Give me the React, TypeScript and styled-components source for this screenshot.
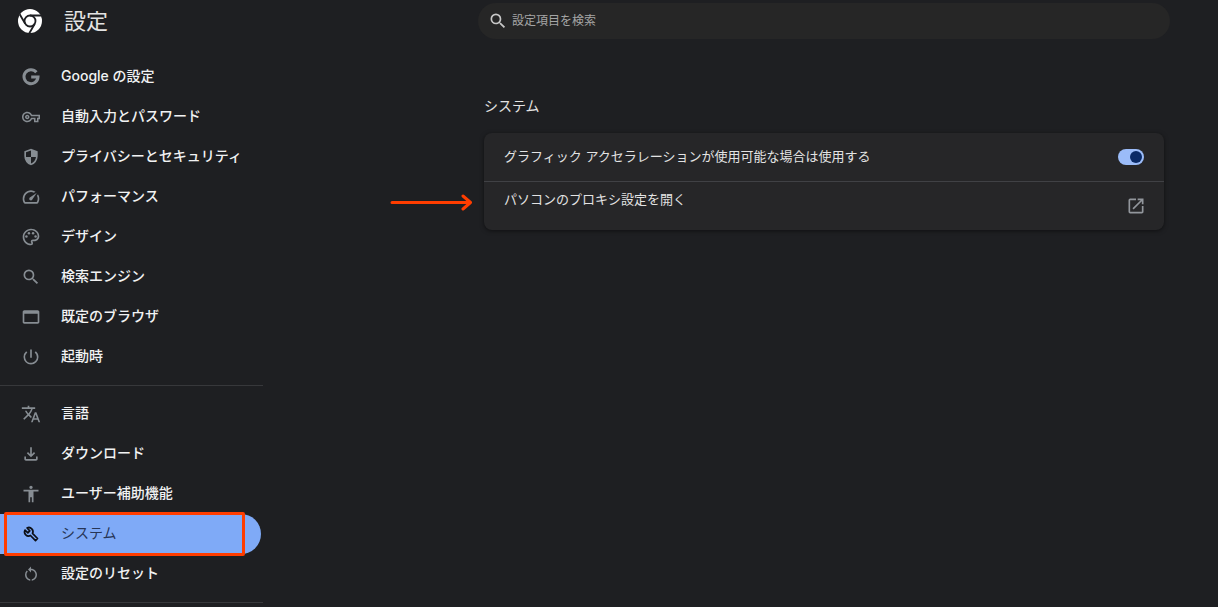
import React, { useState } from "react";
import styled, { createGlobalStyle } from "styled-components";
import {
  MdOutlineVpnKey,
  MdOutlinePalette,
  MdSearch,
  MdPowerSettingsNew,
  MdTranslate,
  MdOutlineFileDownload,
  MdAccessibility,
  MdRestartAlt,
  MdOpenInNew,
} from "react-icons/md";

const GlobalStyle = createGlobalStyle`
  *, *::before, *::after { box-sizing: border-box; }
  body {
    margin: 0;
    background: #1e1f22;
    color: #e3e3e3;
    font-family: Inter, "Noto Sans CJK JP", sans-serif;
    font-size: 14px;
    line-height: 20px;
    overflow: hidden;
  }
`;

const Page = styled.div`
  display: grid;
  grid-template-columns: 264px minmax(0, 1fr);
  min-height: 100vh;
`;

const Sidebar = styled.aside`
  display: flex;
  flex-direction: column;
`;

const Brand = styled.header`
  display: flex;
  align-items: center;
  gap: 22px;
  height: 42px;
  padding-left: 18px;
  margin-bottom: 15px;
`;

const Title = styled.h1`
  margin: 0;
  font-size: 22px;
  line-height: 32px;
  font-weight: 400;
  color: #e3e3e3;
`;

const NavGroup = styled.nav`
  display: flex;
  flex-direction: column;
  padding-bottom: 8px;
  margin-bottom: 8px;
  border-bottom: 1px solid #37383b;
  margin-right: 1px;
`;

const NavLink = styled.a<{ $active?: boolean }>`
  position: relative;
  display: flex;
  align-items: center;
  gap: 20px;
  height: 40px;
  margin-right: 2px;
  padding-left: 21px;
  border-radius: 0 20px 20px 0;
  font-weight: ${(p) => (p.$active ? 400 : 500)};
  color: ${(p) => (p.$active ? "#273556" : "#f1f2f3")};
  background: ${(p) => (p.$active ? "#7faaf7" : "transparent")};
  text-decoration: none;
`;

const NavIcon = styled.span<{ $size: number; $active?: boolean }>`
  flex: none;
  display: flex;
  align-items: center;
  justify-content: center;
  width: 20px;
  height: 20px;
  color: ${(p) => (p.$active ? "#0c0f16" : "#878d93")};

  svg {
    width: ${(p) => p.$size}px;
    height: ${(p) => p.$size}px;
  }
`;

const NavLabel = styled.span`
  padding-bottom: 2px;
`;

const Highlight = styled.span`
  position: absolute;
  inset: -2px 16px -2px 4px;
  border: 3px solid #ff3d00;
  border-radius: 2px;
`;

const Main = styled.main`
  display: flex;
  flex-direction: column;
  padding: 3px 48px 0 214px;
`;

const SearchBox = styled.label`
  display: flex;
  align-items: center;
  gap: 4px;
  height: 36px;
  padding: 0 12px 0 10px;
  border-radius: 18px;
  background: #262626;
  color: #c7c7c7;

  svg {
    flex: none;
    width: 20px;
    height: 20px;
  }
`;

const SearchInput = styled.input`
  flex: 1;
  min-width: 0;
  padding: 0;
  border: 0;
  outline: 0;
  background: transparent;
  color: inherit;
  font: inherit;
  font-size: 12px;

  &::placeholder {
    color: #a5a5a5;
    opacity: 1;
  }
`;

const Section = styled.section`
  margin: 57px 6px 0;
`;

const SectionTitle = styled.h2`
  margin: 0 0 17px;
  font-size: 14px;
  line-height: 20px;
  font-weight: 400;
`;

const Card = styled.div`
  border-radius: 8px;
  background: #262628;
  box-shadow: 0 1px 4px rgba(0, 0, 0, 0.5);
  font-size: 13px;
`;

const Row = styled.div`
  position: relative;
  display: flex;
  align-items: center;
  justify-content: space-between;
  height: 48px;
  padding: 0 20px;

  & + & {
    height: 49px;
    border-top: 1px solid #404145;
  }
`;

const RowLabel = styled.label`
  padding-bottom: 2px;
`;

const ProxyLabel = styled.span`
  align-self: flex-start;
  padding-top: 7px;
`;

const Toggle = styled.input`
  appearance: none;
  display: flex;
  align-items: center;
  justify-content: flex-end;
  width: 26px;
  height: 16px;
  margin: 0;
  padding: 2px;
  border-radius: 8px;
  background: #9bbcf9;

  &::before {
    content: "";
    width: 12px;
    height: 12px;
    border-radius: 50%;
    background: #0a2a66;
  }

  &:not(:checked) {
    justify-content: flex-start;
    background: #5f6368;
  }
`;

const IconButton = styled.button`
  display: flex;
  padding: 0;
  margin-right: -2px;
  border: 0;
  background: none;
  color: #92969c;

  svg {
    width: 20px;
    height: 20px;
  }
`;

const Arrow = styled.svg`
  position: absolute;
  top: 11px;
  left: -94px;
  width: 84px;
  height: 18px;
  fill: none;
  stroke: #ff3d00;
  stroke-width: 3;
  stroke-linecap: round;
  stroke-linejoin: round;
`;

const ChromeLogo = () => (
  <svg width="24" height="24" viewBox="0 0 24 24" aria-hidden="true">
    <circle cx="12" cy="12" r="12" fill="#fff" />
    <g fill="none" stroke="#1e1f22" strokeWidth="1.8">
      <circle cx="12" cy="12" r="5.5" />
      <path d="M12 6.5H23M7.2 14.8L1.7 5.3M16.8 14.8L11.3 24.3" />
    </g>
  </svg>
);

const GoogleIcon = () => (
  <svg viewBox="0 0 20 20" fill="none" stroke="currentColor" strokeWidth="3" aria-hidden="true">
    <path d="M15.4 5.2A7 7 0 1 0 17 10.1H10.2" />
  </svg>
);

const WrenchIcon = () => (
  <svg viewBox="0 0 24 24" fill="none" stroke="currentColor" strokeWidth="2.3" strokeLinejoin="round" aria-hidden="true">
    <path d="M14 11.3L20.7 18L18 20.7L11.3 14A5.4 5.4 0 0 1 4 6.8L7.8 10.4L10.4 7.8L6.8 4A5.4 5.4 0 0 1 14 11.3Z" />
  </svg>
);

const Symbol = ({ d }: { d: string }) => (
  <svg viewBox="0 -960 960 960" fill="currentColor" aria-hidden="true">
    <path d={d} />
  </svg>
);

const SHIELD =
  "M480-80q-139-35-229.5-159.5T160-516v-244l320-120 320 120v244q0 152-90.5 276.5T480-80Zm0-84q97-30 162-118.5T718-480H480v-315l-240 90v207q0 7 2 18h238v316Z";
const GAUGE =
  "M418-340q24 24 62 23.5t56-27.5l224-336-336 224q-27 18-28.5 55t22.5 61Zm62-460q59 0 113.5 16.5T696-734l-76 48q-33-17-68.5-25.5T480-720q-133 0-226.5 93.5T160-400q0 42 11.5 83t32.5 77h552q23-38 33.5-79t10.5-85q0-36-8.5-70T766-540l48-76q30 47 47.5 100T880-404q1 57-13 109t-41 99q-11 18-30 27t-40 9H204q-21 0-40-9.5T134-196q-26-45-40-95.5T80-400q0-83 31.5-155.5t86-127Q252-737 325-768.5T480-800Z";
const WINDOW =
  "M160-160q-33 0-56.5-23.5T80-240v-480q0-33 23.5-56.5T160-800h640q33 0 56.5 23.5T880-720v480q0 33-23.5 56.5T800-160H160Zm0-80h640v-400H160v400Z";

type Item = { label: string; icon: React.ReactNode; size?: number; active?: boolean };

const primary: Item[] = [
  { label: "Google の設定", icon: <GoogleIcon /> },
  { label: "自動入力とパスワード", icon: <MdOutlineVpnKey />, size: 18 },
  { label: "プライバシーとセキュリティ", icon: <Symbol d={SHIELD} /> },
  { label: "パフォーマンス", icon: <Symbol d={GAUGE} /> },
  { label: "デザイン", icon: <MdOutlinePalette /> },
  { label: "検索エンジン", icon: <MdSearch /> },
  { label: "既定のブラウザ", icon: <Symbol d={WINDOW} /> },
  { label: "起動時", icon: <MdPowerSettingsNew /> },
];

const advanced: Item[] = [
  { label: "言語", icon: <MdTranslate /> },
  { label: "ダウンロード", icon: <MdOutlineFileDownload /> },
  { label: "ユーザー補助機能", icon: <MdAccessibility /> },
  { label: "システム", icon: <WrenchIcon />, size: 18, active: true },
  { label: "設定のリセット", icon: <MdRestartAlt />, size: 18 },
];

const Nav = ({ items, label }: { items: Item[]; label: string }) => (
  <NavGroup aria-label={label}>
    {items.map(({ label: text, icon, size = 20, active }) => (
      <NavLink key={text} href="#" $active={active} aria-current={active ? "page" : undefined}>
        <NavIcon $size={size} $active={active}>
          {icon}
        </NavIcon>
        <NavLabel>{text}</NavLabel>
        {active && <Highlight />}
      </NavLink>
    ))}
  </NavGroup>
);

export default function App() {
  const [accelerated, setAccelerated] = useState(true);

  return (
    <>
      <GlobalStyle />
      <Page>
        <Sidebar>
          <Brand>
            <ChromeLogo />
            <Title>設定</Title>
          </Brand>
          <Nav items={primary} label="基本設定" />
          <Nav items={advanced} label="詳細設定" />
        </Sidebar>
        <Main>
          <SearchBox>
            <MdSearch />
            <SearchInput type="text" placeholder="設定項目を検索" />
          </SearchBox>
          <Section>
            <SectionTitle>システム</SectionTitle>
            <Card>
              <Row>
                <RowLabel htmlFor="acceleration">グラフィック アクセラレーションが使用可能な場合は使用する</RowLabel>
                <Toggle
                  id="acceleration"
                  type="checkbox"
                  checked={accelerated}
                  onChange={(e) => setAccelerated(e.target.checked)}
                />
              </Row>
              <Row>
                <Arrow viewBox="0 0 84 18" aria-hidden="true">
                  <path d="M2 9.5H80M73 3L80.5 9.5L73 16" />
                </Arrow>
                <ProxyLabel id="proxy-label">パソコンのプロキシ設定を開く</ProxyLabel>
                <IconButton type="button" aria-labelledby="proxy-label">
                  <MdOpenInNew />
                </IconButton>
              </Row>
            </Card>
          </Section>
        </Main>
      </Page>
    </>
  );
}
